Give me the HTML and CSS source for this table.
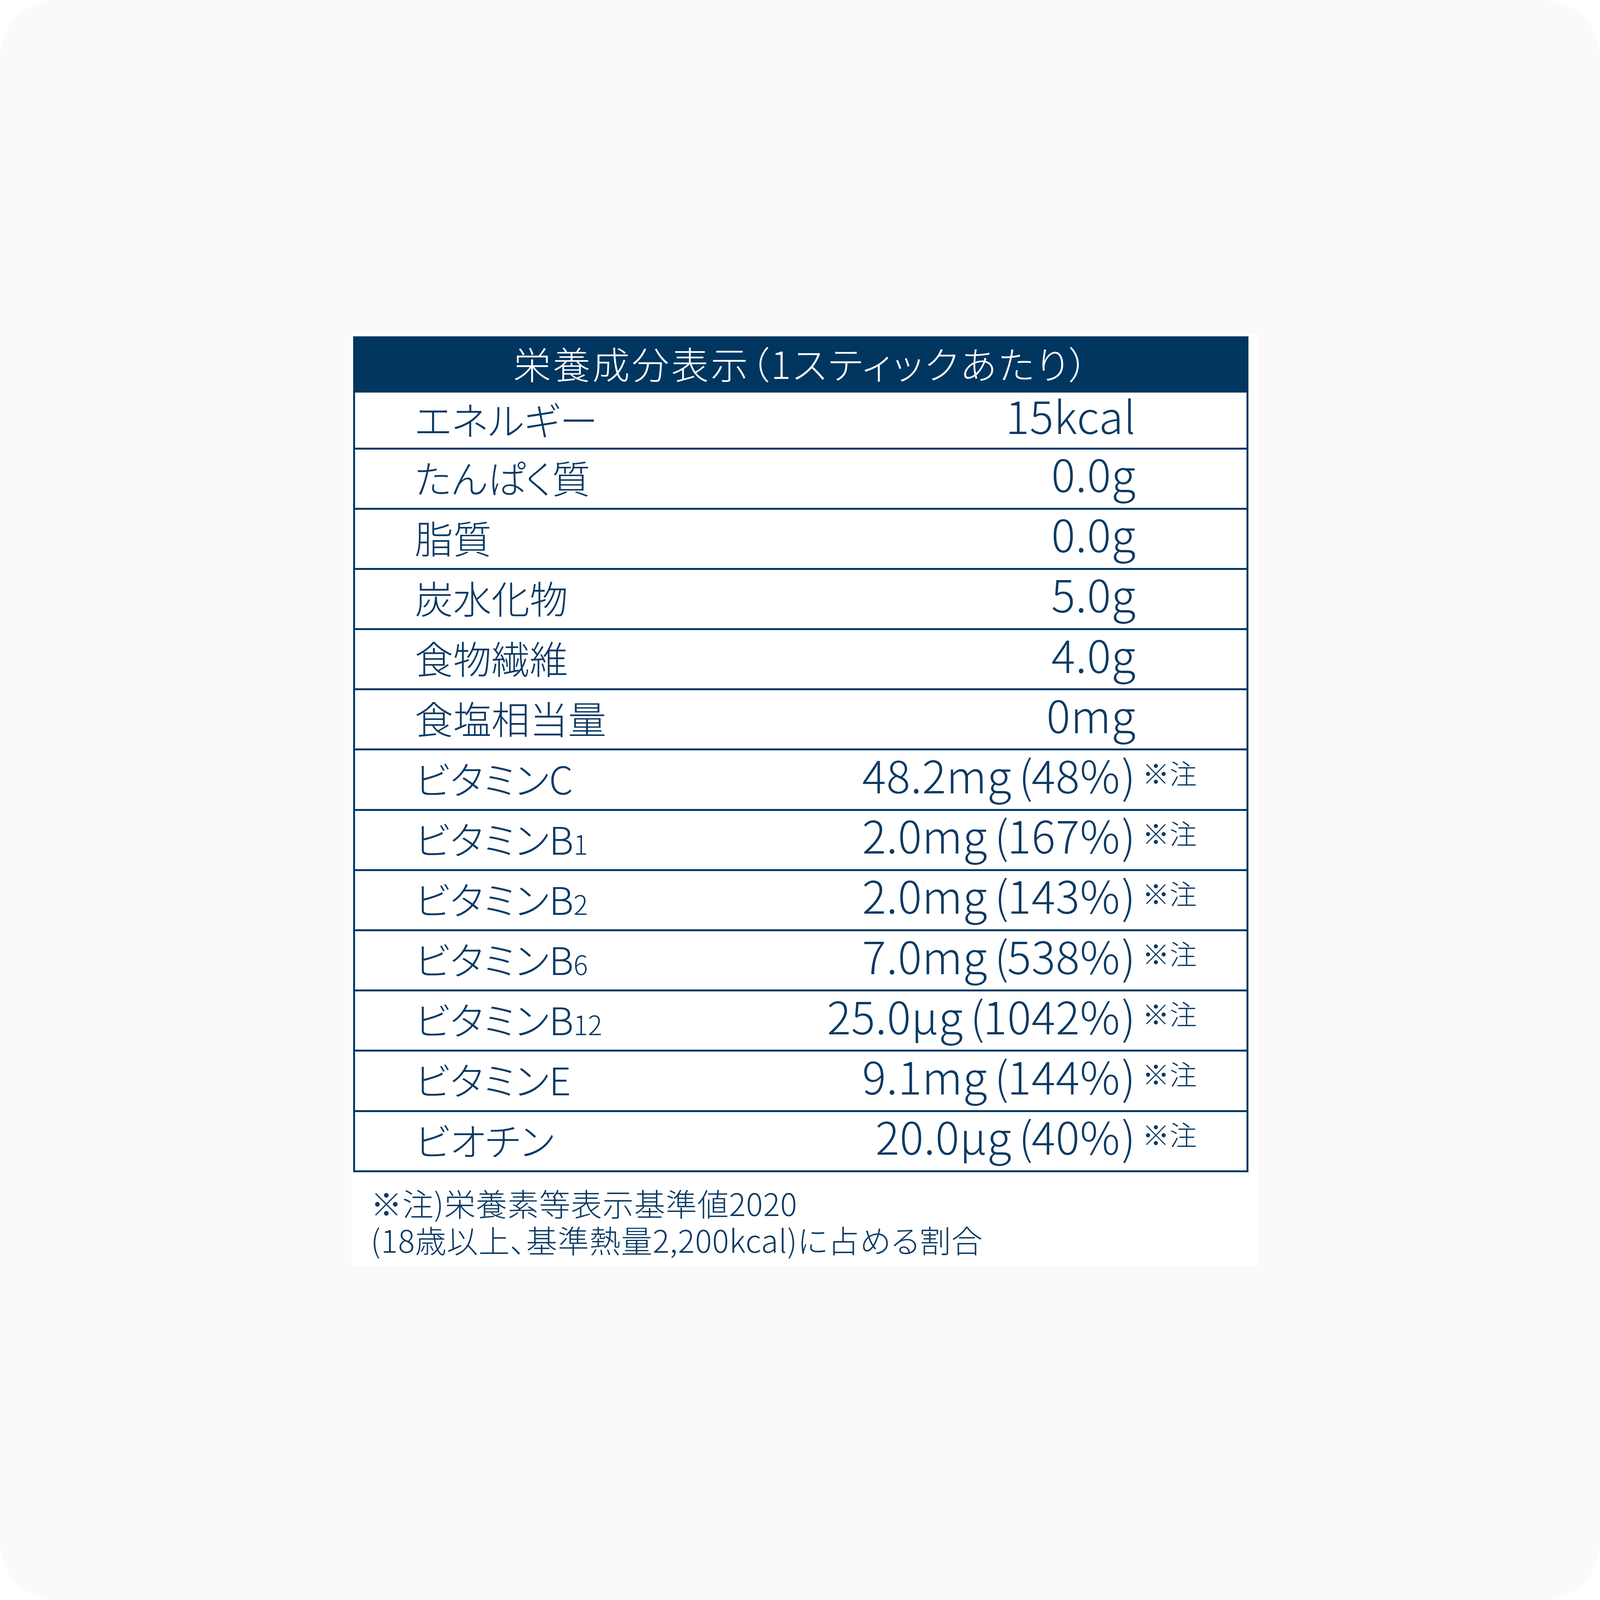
FILE: index.html
```html
<!DOCTYPE html>
<html lang="ja">
<head>
<meta charset="utf-8">
<title>栄養成分表示</title>
<link rel="stylesheet" href="styles.css">
</head>
<body>
<div class="page">
  <div class="sheet">
    <div class="table">
      <div class="table-head">栄養成分表示（1スティックあたり）</div>
      <div class="rows">
        <div class="row"><div class="label">エネルギー</div><div class="value">15kcal</div><div class="note"></div></div>
        <div class="row"><div class="label">たんぱく質</div><div class="value">0.0g</div><div class="note"></div></div>
        <div class="row"><div class="label">脂質</div><div class="value">0.0g</div><div class="note"></div></div>
        <div class="row"><div class="label">炭水化物</div><div class="value">5.0g</div><div class="note"></div></div>
        <div class="row"><div class="label">食物繊維</div><div class="value">4.0g</div><div class="note"></div></div>
        <div class="row"><div class="label">食塩相当量</div><div class="value">0mg</div><div class="note"></div></div>
        <div class="row"><div class="label">ビタミンC</div><div class="value">48.2mg<span class="po">(</span>48%<span class="pc">)</span></div><div class="note">※注</div></div>
        <div class="row"><div class="label">ビタミンB<span class="sub">1</span></div><div class="value">2.0mg<span class="po">(</span>167%<span class="pc">)</span></div><div class="note">※注</div></div>
        <div class="row"><div class="label">ビタミンB<span class="sub">2</span></div><div class="value">2.0mg<span class="po">(</span>143%<span class="pc">)</span></div><div class="note">※注</div></div>
        <div class="row"><div class="label">ビタミンB<span class="sub">6</span></div><div class="value">7.0mg<span class="po">(</span>538%<span class="pc">)</span></div><div class="note">※注</div></div>
        <div class="row"><div class="label">ビタミンB<span class="sub">12</span></div><div class="value">25.0μg<span class="po">(</span>1042%<span class="pc">)</span></div><div class="note">※注</div></div>
        <div class="row"><div class="label">ビタミンE</div><div class="value">9.1mg<span class="po">(</span>144%<span class="pc">)</span></div><div class="note">※注</div></div>
        <div class="row"><div class="label">ビオチン</div><div class="value">20.0μg<span class="po">(</span>40%<span class="pc">)</span></div><div class="note">※注</div></div>
      </div>
    </div>
    <div class="footnote">
      <div class="fn-line">※注)栄養素等表示基準値2020</div>
      <div class="fn-line">(18歳以上、基準熱量2,200kcal)に占める割合</div>
    </div>
  </div>
</div>
</body>
</html>
```

FILE: styles.css
```css
html, body {
  margin: 0;
  padding: 0;
  background: #ffffff;
}

body {
  font-family: "Noto Sans CJK JP", "Noto Sans", sans-serif;
}

.page {
  width: 100vw;
  height: 100vh;
  box-sizing: border-box;
  background: #fafafa;
  border-radius: 145px;
  padding: 856px 0 0 899px;
  overflow: hidden;
}

.sheet {
  width: 2323px;
  box-sizing: border-box;
  background: #ffffff;
  padding: 5px 26px 22px 5px;
}

.table {
  width: 2292px;
  color: #0b3a64;
}

.table-head {
  height: 144px;
  box-sizing: border-box;
  padding-bottom: 9px;
  padding-left: 5px;
  background: #003660;
  color: #ffffff;
  font-size: 96px;
  font-weight: 300;
  letter-spacing: 5px;
  line-height: 1;
  display: flex;
  align-items: center;
  justify-content: center;
  font-feature-settings: "palt";
}

.rows {
  border-left: 5px solid #013a66;
  border-right: 5px solid #013a66;
}

.row {
  display: grid;
  grid-template-columns: 1fr auto 283px;
  align-items: center;
  height: 149.2px;
  border-bottom: 5px solid #013a66;
  padding-left: 153px;
}

.row:first-child {
  height: 140.5px;
}

.label {
  font-size: 98px;
  font-weight: 300;
  line-height: 1;
  padding-bottom: 11px;
  white-space: nowrap;
  font-feature-settings: "palt";
}

.sub {
  font-size: 0.7em;
}

.value {
  font-size: 114px;
  font-weight: 300;
  line-height: 1;
  letter-spacing: 1px;
  text-align: right;
  white-space: nowrap;
  padding-bottom: 28px;
}

.po {
  margin-left: 18px;
  margin-right: -4px;
}

.pc {
  margin-left: 3px;
}

.note {
  font-size: 70px;
  font-weight: 300;
  line-height: 1;
  padding-left: 16px;
  margin-bottom: 37px;
  white-space: nowrap;
}

.footnote {
  margin-top: 30px;
  padding-left: 45px;
  font-size: 80px;
  font-weight: 300;
  letter-spacing: 1px;
  line-height: 94.5px;
  color: #0b3a64;
  font-feature-settings: "palt";
}

.fn-line {
  white-space: nowrap;
}
```
